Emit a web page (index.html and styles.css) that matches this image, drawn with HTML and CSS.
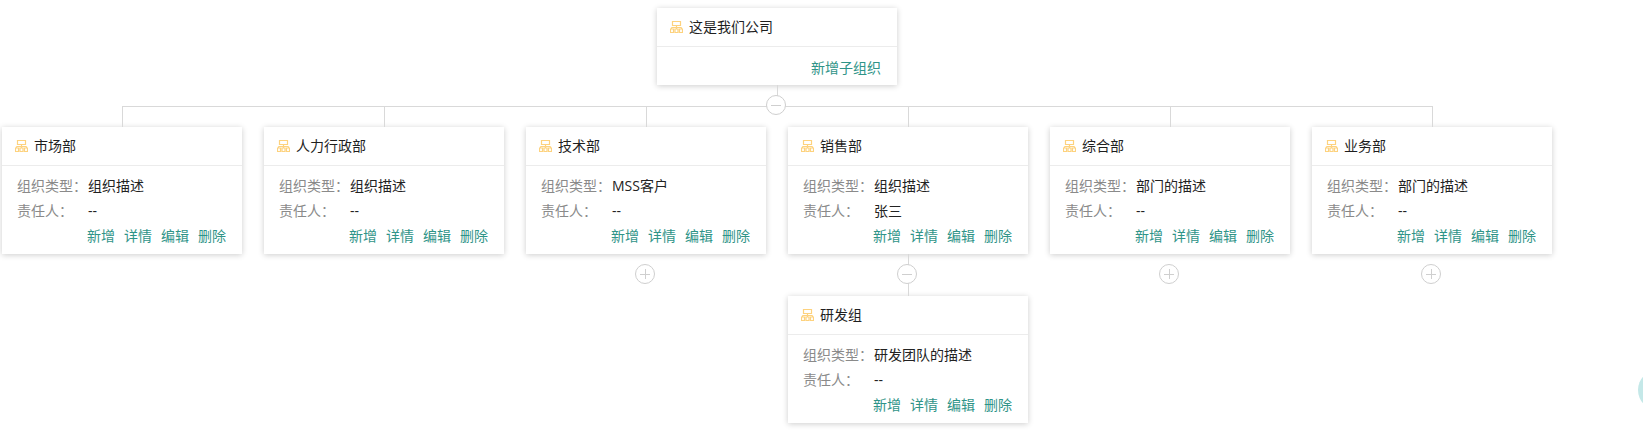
FILE: index.html
```html
<!DOCTYPE html>
<html lang="zh">
<head>
<meta charset="utf-8">
<title>组织架构</title>
<link rel="stylesheet" href="styles.css">
</head>
<body>
<svg class="defs" width="0" height="0"><symbol id="org" viewBox="0 0 13 12"><path d="M2.500 .5h8v4h-8zM6.500 4.500v2M1.500 6.500h10M1.500 6.500v1.500M11.500 6.500v1.500M6.500 6.500v1.500M.5 8h3v3.500h-3zM5 8h3v3.500H5zM9.500 8h3v3.500h-3z" fill="none" stroke="currentColor" stroke-width="1.200"/></symbol></svg>
<main class="tree">
  <section class="card root">
    <header class="head"><svg class="icon"><use href="#org"/></svg><span>这是我们公司</span></header>
    <div class="foot"><a class="act">新增子组织</a></div>
  </section>
  <div class="stem root-stem"><span class="toggle minus"></span></div>
  <div class="bar"></div>
  <div class="row">
    <div class="col">
      <div class="stem up"></div>
      <section class="card">
        <header class="head"><svg class="icon"><use href="#org"/></svg><span>市场部</span></header>
        <div class="body">
          <div class="line"><span class="label">组织类型：</span><span class="val">组织描述</span></div>
          <div class="line"><span class="label">责任人：</span><span class="val">--</span></div>
          <div class="acts"><a class="act">新增</a><a class="act">详情</a><a class="act">编辑</a><a class="act">删除</a></div>
        </div>
      </section>
    </div>
    <div class="col">
      <div class="stem up"></div>
      <section class="card">
        <header class="head"><svg class="icon"><use href="#org"/></svg><span>人力行政部</span></header>
        <div class="body">
          <div class="line"><span class="label">组织类型：</span><span class="val">组织描述</span></div>
          <div class="line"><span class="label">责任人：</span><span class="val">--</span></div>
          <div class="acts"><a class="act">新增</a><a class="act">详情</a><a class="act">编辑</a><a class="act">删除</a></div>
        </div>
      </section>
    </div>
    <div class="col">
      <div class="stem up"></div>
      <section class="card">
        <header class="head"><svg class="icon"><use href="#org"/></svg><span>技术部</span></header>
        <div class="body">
          <div class="line"><span class="label">组织类型：</span><span class="val">MSS客户</span></div>
          <div class="line"><span class="label">责任人：</span><span class="val">--</span></div>
          <div class="acts"><a class="act">新增</a><a class="act">详情</a><a class="act">编辑</a><a class="act">删除</a></div>
        </div>
      </section>
      <div class="expander"><span class="toggle plus"></span></div>
    </div>
    <div class="col">
      <div class="stem up"></div>
      <section class="card">
        <header class="head"><svg class="icon"><use href="#org"/></svg><span>销售部</span></header>
        <div class="body">
          <div class="line"><span class="label">组织类型：</span><span class="val">组织描述</span></div>
          <div class="line"><span class="label">责任人：</span><span class="val">张三</span></div>
          <div class="acts"><a class="act">新增</a><a class="act">详情</a><a class="act">编辑</a><a class="act">删除</a></div>
        </div>
      </section>
      <div class="stem child-stem"><span class="toggle minus"></span></div>
      <section class="card">
        <header class="head"><svg class="icon"><use href="#org"/></svg><span>研发组</span></header>
        <div class="body">
          <div class="line"><span class="label">组织类型：</span><span class="val">研发团队的描述</span></div>
          <div class="line"><span class="label">责任人：</span><span class="val">--</span></div>
          <div class="acts"><a class="act">新增</a><a class="act">详情</a><a class="act">编辑</a><a class="act">删除</a></div>
        </div>
      </section>
    </div>
    <div class="col">
      <div class="stem up"></div>
      <section class="card">
        <header class="head"><svg class="icon"><use href="#org"/></svg><span>综合部</span></header>
        <div class="body">
          <div class="line"><span class="label">组织类型：</span><span class="val">部门的描述</span></div>
          <div class="line"><span class="label">责任人：</span><span class="val">--</span></div>
          <div class="acts"><a class="act">新增</a><a class="act">详情</a><a class="act">编辑</a><a class="act">删除</a></div>
        </div>
      </section>
      <div class="expander"><span class="toggle plus"></span></div>
    </div>
    <div class="col">
      <div class="stem up"></div>
      <section class="card">
        <header class="head"><svg class="icon"><use href="#org"/></svg><span>业务部</span></header>
        <div class="body">
          <div class="line"><span class="label">组织类型：</span><span class="val">部门的描述</span></div>
          <div class="line"><span class="label">责任人：</span><span class="val">--</span></div>
          <div class="acts"><a class="act">新增</a><a class="act">详情</a><a class="act">编辑</a><a class="act">删除</a></div>
        </div>
      </section>
      <div class="expander"><span class="toggle plus"></span></div>
    </div>
  </div>
</main>
<div class="blob"></div>
</body>
</html>
```
FILE: styles.css
```css
html, body {
  margin: 0;
  height: 436px;
  overflow: hidden;
  background: #fff;
  font-family: "Open Sans", "Noto Sans CJK SC", sans-serif;
  font-size: 14px;
  color: #333;
}
body { position: relative; }
.defs { position: absolute; }
.tree {
  width: 1550px;
  padding: 8px 0 0 2px;
  display: flex;
  flex-direction: column;
  align-items: center;
}
.card {
  width: 240px;
  background: #fff;
  box-shadow: 0 1px 6px rgba(0, 0, 0, .2);
  box-sizing: border-box;
}
.root { height: 77px; }
.head {
  height: 39px;
  box-sizing: border-box;
  display: flex;
  align-items: center;
  gap: 5px;
  padding-left: 13px;
  border-bottom: 1px solid #ececec;
  color: #1f1f1f;
  line-height: 20px;
}
.icon { width: 13px; height: 12px; margin-right: 1px; color: #fdd27e; flex: none; }
.foot {
  display: flex;
  justify-content: flex-end;
  padding: 9px 16px 0;
  line-height: 24px;
}
.act { color: #2f9488; }
.stem {
  position: relative;
  width: 1px;
  background: #d9d9d9;
  align-self: center;
}
.root-stem { height: 21px; margin-left: 1px; }
.bar { width: 1311px; height: 1px; background: #d9d9d9; }
.row { display: flex; gap: 22px; align-self: stretch; }
.col { width: 240px; display: flex; flex-direction: column; }
.up { height: 20px; margin-left: 1px; }
.child-stem { height: 42px; margin-left: 1px; }
.toggle {
  position: absolute;
  width: 20px;
  height: 20px;
  box-sizing: border-box;
  border: 1px solid #cfcfcf;
  border-radius: 50%;
  background: #fff;
}
.toggle::before, .toggle::after {
  content: "";
  position: absolute;
  background: #cfcfcf;
}
.toggle::before { left: 4px; right: 4px; top: 8.500px; height: 1px; }
.plus::after { top: 4px; bottom: 4px; left: 8.500px; width: 1px; }
.root-stem .toggle { left: -11px; top: 10px; }
.child-stem .toggle { left: -11px; top: 10px; }
.expander { position: relative; height: 42px; }
.expander .toggle { left: 109px; top: 10px; }
.body { padding: 7px 16px 0 15px; height: 88px; box-sizing: border-box; }
.line { display: flex; height: 25px; line-height: 25px; }
.label { width: 71px; color: #8a8a8a; flex: none; }
.val { color: #222; }
.acts { display: flex; justify-content: flex-end; gap: 9px; line-height: 25px; }
.blob {
  position: absolute;
  left: 1638px;
  top: 370px;
  width: 40px;
  height: 40px;
  border-radius: 50%;
  background: #c4e8e8;
}
```
